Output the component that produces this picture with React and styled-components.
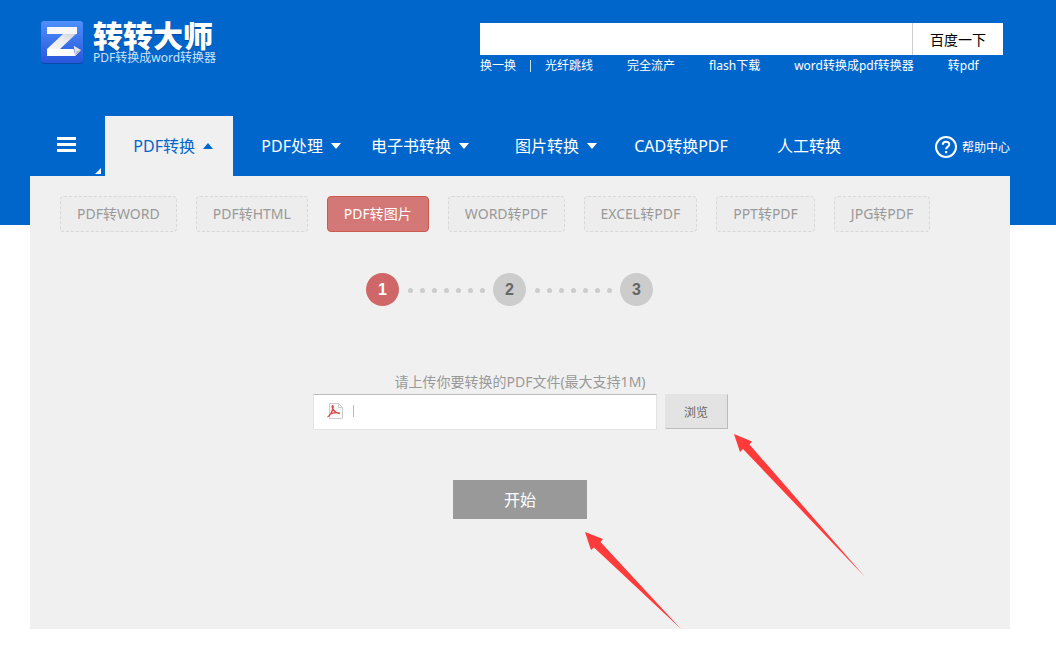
import React from 'react'
import styled, { createGlobalStyle } from 'styled-components'

const GlobalStyle = createGlobalStyle`
  * {
    box-sizing: border-box;
  }
  body {
    margin: 0;
    background: #fff;
    font-family: "Noto Sans", "Noto Sans CJK SC", sans-serif;
    font-size: 12px;
  }
  a {
    color: inherit;
    text-decoration: none;
  }
  button, input {
    font-family: inherit;
    margin: 0;
    border-radius: 0;
    outline: none;
  }
`
const Page = styled.div`
  padding: 0 46px 30px 30px;
  background: linear-gradient(#0066cc 225px, #fff 225px);
`
const Header = styled.header`
  height: 116px;
  padding: 20px 7px 0 10px;
  display: flex;
  justify-content: space-between;
  align-items: flex-start;
`
const Logo = styled.a`
  display: flex;
  gap: 8px;
  color: #fff;
`
const LogoText = styled.div`
  display: flex;
  flex-direction: column;
`
const LogoName = styled.strong`
  font-family: "Noto Sans CJK SC", sans-serif;
  font-size: 30px;
  line-height: 28px;
  font-weight: 900;
  text-shadow: 0 1px 1px #0a4796;
`
const LogoSub = styled.span`
  font-size: 12px;
  line-height: 20px;
  color: #cfe2f8;
`
const SearchArea = styled.div`
  width: 523px;
  padding-top: 3px;
`
const SearchForm = styled.form`
  display: flex;
  height: 32px;
`
const SearchInput = styled.input`
  flex: 1;
  min-width: 0;
  padding: 0 8px;
  border: 0;
  background: #fff;
  font-size: 14px;
`
const SearchBtn = styled.button`
  width: 91px;
  padding: 0;
  border: 0;
  border-left: 1px solid #ccc;
  background: #fff;
  color: #000;
  font-size: 14px;
`
const HotLinks = styled.div`
  display: flex;
  align-items: center;
  gap: 34px;
  line-height: 22px;
  color: #fff;
  white-space: nowrap;
`
const Refresh = styled.a`
  display: flex;
  align-items: center;
  gap: 14px;
  margin-right: -20px;
  &::after {
    content: '';
    width: 1px;
    height: 12px;
    background: #cfe0f3;
  }
`
const Nav = styled.nav`
  height: 60px;
  display: flex;
  color: #fff;
  white-space: nowrap;
`
const MenuBtn = styled.button`
  width: 75px;
  padding: 0;
  border: 0;
  background: none;
  color: #fff;
  display: flex;
  svg {
    display: block;
  }
`
const NavItem = styled.a`
  width: 128px;
  padding: 0 ${p => p.$arrow ? '20px' : '0'} 2px 0;
  display: flex;
  justify-content: ${p => p.$arrow ? 'flex-end' : 'center'};
  align-items: center;
  gap: 8px;
  font-size: 16px;
  background: ${p => p.$active ? '#f0f0f0' : 'transparent'};
  color: ${p => p.$active ? '#0066cc' : '#fff'};
`
const Caret = styled.i`
  margin-top: 2px;
  border: 5px solid transparent;
  border-width: ${p => p.$up ? '0 5px 6px' : '6px 5px 0'};
  border-top-color: ${p => p.$up ? 'transparent' : 'currentColor'};
  border-bottom-color: ${p => p.$up ? 'currentColor' : 'transparent'};
`
const Help = styled.a`
  margin-left: auto;
  padding-top: 2px;
  display: flex;
  align-items: center;
  gap: 5px;
`
const Panel = styled.main`
  padding: 20px 30px 110px;
  background: #f0f0f0;
  display: flex;
  flex-direction: column;
  align-items: center;
`
const Tabs = styled.div`
  align-self: stretch;
  display: flex;
  gap: 19px;
`
const Tab = styled.button`
  height: 36px;
  padding: 0 16px 2px;
  border: 1px ${p => p.$active ? 'solid #cd5a4f' : 'dashed #d8d8d8'};
  border-radius: 4px;
  background: ${p => p.$active ? '#d47777' : '#ededed'};
  color: ${p => p.$active ? '#fff' : '#999'};
  font-size: 14px;
  white-space: nowrap;
`
const Steps = styled.div`
  margin-top: 41px;
  padding-right: 21px;
  display: flex;
  align-items: center;
`
const Step = styled.span`
  width: 33px;
  height: 33px;
  border-radius: 50%;
  background: ${p => p.$active ? '#cf6668' : '#ccc'};
  color: ${p => p.$active ? '#fff' : '#666'};
  font: bold 16px/33px "Liberation Sans", sans-serif;
  text-align: center;
`
const Dots = styled.span`
  width: 94px;
  padding-top: 2px;
  display: flex;
  justify-content: center;
  gap: 7px;
`
const Dot = styled.i`
  width: 5px;
  height: 5px;
  border-radius: 50%;
  background: #ccc;
`
const UploadForm = styled.form`
  margin-top: 64px;
  display: flex;
  flex-direction: column;
  align-items: center;
`
const Tip = styled.label`
  font-size: 14px;
  line-height: 24px;
  color: #999;
`
const FileRow = styled.div`
  display: flex;
  gap: 8px;
`
const FileBox = styled.div`
  width: 344px;
  height: 36px;
  padding: 0 0 2px 13px;
  display: flex;
  align-items: center;
  gap: 10px;
  background: #fff;
  border: 1px solid #e3e3e3;
  border-top-color: #bbb;
`
const FileInput = styled.input`
  flex: 1;
  height: 12px;
  padding: 0 8px;
  border: 0;
  border-left: 1px solid #bbb;
  background: #fff;
  color: #666;
  font-size: 12px;
`
const BtnWrap = styled.div`
  position: relative;
`
const BrowseBtn = styled.button`
  width: 63px;
  height: 35px;
  padding: 0;
  display: block;
  border: 1px solid #e3e3e3;
  border-right-color: #bbb;
  border-bottom-color: #bbb;
  background: #e3e3e3;
  color: #666;
  font-size: 12px;
`
const StartWrap = styled(BtnWrap)`
  margin-top: 50px;
`
const StartBtn = styled.button`
  width: 134px;
  height: 39px;
  padding: 0 0 2px;
  display: block;
  border: 0;
  background: #999;
  color: #fff;
  font-size: 16px;
`
// red pointer lying over the panel, hung from the button it points at
const Pointer = styled.svg`
  position: absolute;
  left: ${p => p.$left}px;
  top: ${p => p.$top}px;
  pointer-events: none;
`

const navItems = [
  { name: 'PDF转换', arrow: true, active: true },
  { name: 'PDF处理', arrow: true },
  { name: '电子书转换', arrow: true },
  { name: '图片转换', arrow: true },
  { name: 'CAD转换PDF' },
  { name: '人工转换' }
]
const hotLinks = ['光纤跳线', '完全流产', 'flash下载', 'word转换成pdf转换器', '转pdf']
const tabs = ['PDF转WORD', 'PDF转HTML', 'PDF转图片', 'WORD转PDF', 'EXCEL转PDF', 'PPT转PDF', 'JPG转PDF']

const LogoIcon = () => (
  <svg width="45" height="45" viewBox="0 0 45 45" aria-hidden="true">
    <defs>
      <linearGradient id="logoBg" x1="0" y1="0" x2="0" y2="1">
        <stop offset="0" stopColor="#4f8ffb" />
        <stop offset="1" stopColor="#2856dc" />
      </linearGradient>
      <linearGradient id="logoZ" x1="1" y1="0" x2="0" y2="1">
        <stop offset="0" stopColor="#c9ccd2" />
        <stop offset=".4" stopColor="#e9ebee" />
        <stop offset="1" stopColor="#f6f7f8" />
      </linearGradient>
    </defs>
    <rect x="1" y="2" width="42" height="42" rx="3" fill="#0a4aa8" />
    <rect x="1" y="1" width="42" height="42" rx="3" fill="url(#logoBg)" />
    <path d="M37 13L20 29H7l16-15z" fill="url(#logoZ)" />
    <path d="M7 7h30v7H7z" fill="#f7f7f8" />
    <path d="M7 29h26.500l2 7H7z" fill="#fff" />
    <path d="M33.700 25.700L41 30l-5.700 6z" fill="#e3e4e6" />
    <path d="M35.300 36L41 30l-5 1.500z" fill="#b9bcc2" />
  </svg>
)

const MenuIcon = () => (
  <svg width="75" height="60" viewBox="0 0 75 60" fill="currentColor" aria-hidden="true">
    <path d="M27 21h19v3H27zM27 27h19v3H27zM27 33h19v3H27zM71 52v6h-6z" />
  </svg>
)

const HelpIcon = () => (
  <svg width="22" height="22" viewBox="0 0 22 22" fill="none" stroke="#fff" strokeWidth="2" aria-hidden="true">
    <circle cx="11" cy="11" r="10" />
    <path d="M7.8 8.7C7.8 6.7 9 5.7 11 5.7s3.3 1.1 3.3 2.8c0 2.2-3.2 2.3-3.2 4.7" />
    <path d="M10 15h2.2v2.2H10z" fill="#fff" stroke="none" />
  </svg>
)

const PdfIcon = () => (
  <svg width="16" height="16" viewBox="0 0 16 16" fill="none" aria-hidden="true">
    <path d="M2.5.5h9l4 4v11h-13z" fill="#fafafa" stroke="#ccc" />
    <path d="M11.5.5v4h4" stroke="#ccc" />
    <path d="M.5 14C3 13 6.200 7 6.200 3.500c0-1.200-1.400-1-1 .5.800 3 3.500 6 7.600 6.500M2.500 11.500c3-1.700 6-2.300 10-1.500" stroke="#dd4347" strokeWidth="1.300" />
  </svg>
)

class App extends React.Component {
  render() {
    return <Page>
      <GlobalStyle />
      <Header>
        <Logo href="#">
          <LogoIcon />
          <LogoText>
            <LogoName>转转大师</LogoName>
            <LogoSub>PDF转换成word转换器</LogoSub>
          </LogoText>
        </Logo>
        <SearchArea>
          <SearchForm>
            <SearchInput type="text" aria-label="搜索" />
            <SearchBtn type="button">百度一下</SearchBtn>
          </SearchForm>
          <HotLinks>
            <Refresh href="#">换一换</Refresh>
            {hotLinks.map(name => <a href="#" key={name}>{name}</a>)}
          </HotLinks>
        </SearchArea>
      </Header>
      <Nav>
        <MenuBtn type="button" aria-label="菜单"><MenuIcon /></MenuBtn>
        {navItems.map(item => (
          <NavItem href="#" key={item.name} $arrow={item.arrow} $active={item.active}>
            {item.name}
            {item.arrow && <Caret $up={item.active} />}
          </NavItem>
        ))}
        <Help href="#"><HelpIcon />帮助中心</Help>
      </Nav>
      <Panel>
        <Tabs>
          {tabs.map(name => <Tab type="button" key={name} $active={name === 'PDF转图片'}>{name}</Tab>)}
        </Tabs>
        <Steps>
          {[1, 2, 3].map(n => (
            <React.Fragment key={n}>
              {n > 1 && <Dots>{[0, 1, 2, 3, 4, 5, 6].map(i => <Dot key={i} />)}</Dots>}
              <Step $active={n === 1}>{n}</Step>
            </React.Fragment>
          ))}
        </Steps>
        <UploadForm>
          <Tip htmlFor="file">请上传你要转换的PDF文件(最大支持1M)</Tip>
          <FileRow>
            <FileBox>
              <PdfIcon />
              <FileInput id="file" type="text" readOnly />
            </FileBox>
            <BtnWrap>
              <BrowseBtn type="button">浏览</BrowseBtn>
              <Pointer $left={69} $top={40} width="131" height="143" viewBox="0 0 131 143">
                <path d="M0 0L18 7.500 15.500 10.500 131 143 9 15 6 18z" fill="#fe3b3b" />
              </Pointer>
            </BtnWrap>
          </FileRow>
          <StartWrap>
            <StartBtn type="button">开始</StartBtn>
            <Pointer $left={132} $top={52} width="96" height="97" viewBox="0 0 96 97">
              <path d="M0 0L18 7 15.500 10 96 97 9 15.500 6 18z" fill="#fe3b3b" />
            </Pointer>
          </StartWrap>
        </UploadForm>
      </Panel>
    </Page>
  }
}
export default App
